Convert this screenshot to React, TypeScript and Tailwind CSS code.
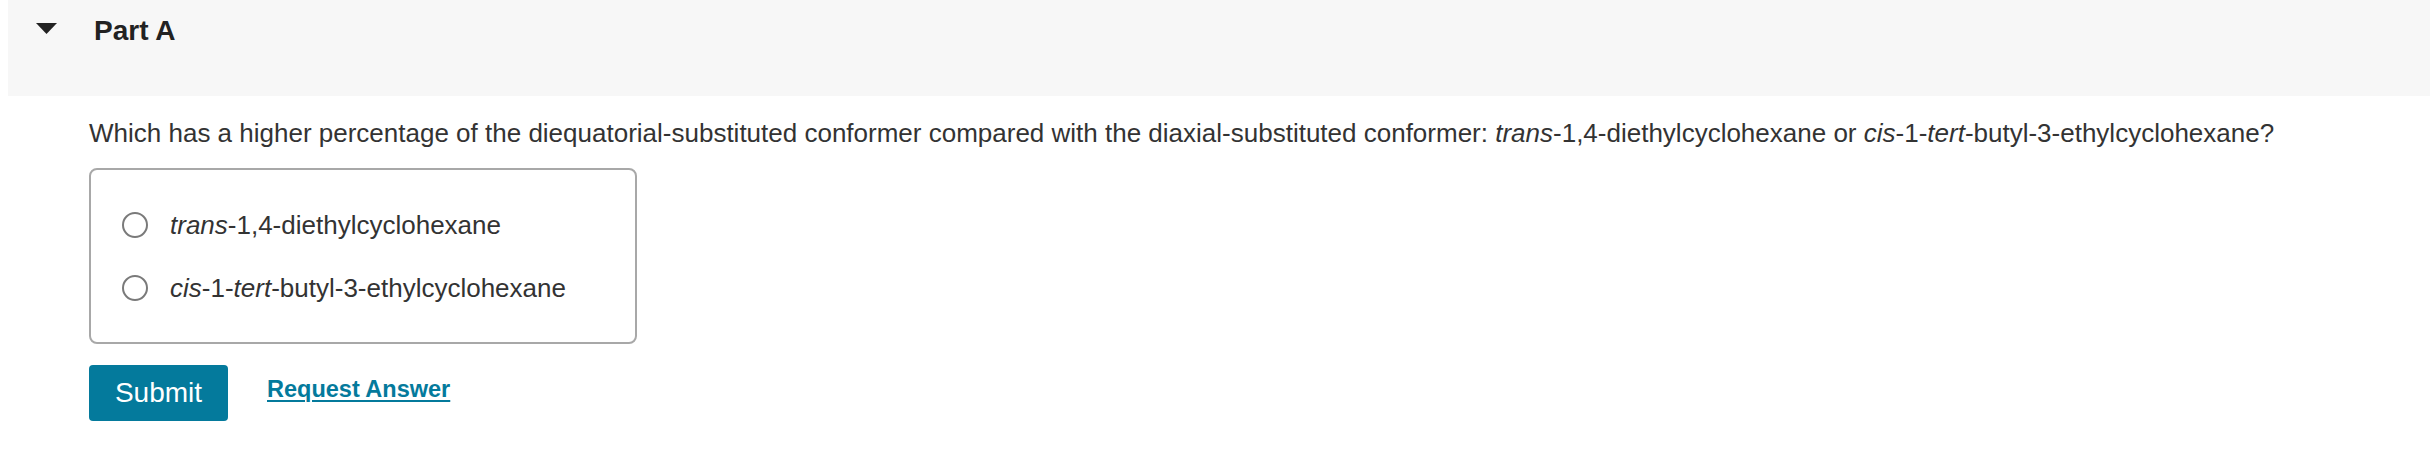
import React from "react";

const font = { fontFamily: '"Liberation Sans", Arial, Helvetica, sans-serif' };

function Radio() {
  return (
    <span className="inline-block w-[26px] h-[26px] rounded-full border-2 border-[#7a7a7a] bg-white shrink-0" />
  );
}

export default function App() {
  return (
    <div className="w-[2430px] h-[470px] bg-white text-[#333333] font-['Liberation_Sans',Arial,sans-serif]" style={font}>
      <div className="ml-[8px] h-[96px] bg-[#f7f7f7] flex items-start">
        <svg className="ml-[28px] mt-[23px] shrink-0" width="21" height="11" viewBox="0 0 21 11">
          <polygon points="0,0 21,0 10.5,11" fill="#222222" />
        </svg>
        <div className="ml-[37px] pt-[15px] text-[28px] leading-[32px] font-bold text-[#222222]">Part A</div>
      </div>
      <div className="pl-[89px]">
        <p className="mt-[19px] text-[26px] leading-[36px]">
          Which has a higher percentage of the diequatorial-substituted conformer compared with the diaxial-substituted conformer: <i>trans</i>-1,4-diethylcyclohexane or <i>cis</i>-1-<i>tert</i>-butyl-3-ethylcyclohexane?
        </p>
        <div className="mt-[17px] w-[548px] h-[176px] border-2 border-[#a8a8a8] rounded-[8px] pl-[31px] pt-[37px] flex flex-col gap-[27px]">
          <label className="flex items-center gap-[22px] text-[26px] leading-[36px]">
            <Radio />
            <span><i>trans</i>-1,4-diethylcyclohexane</span>
          </label>
          <label className="flex items-center gap-[22px] text-[26px] leading-[36px]">
            <Radio />
            <span><i>cis</i>-1-<i>tert</i>-butyl-3-ethylcyclohexane</span>
          </label>
        </div>
        <div className="mt-[21px] flex items-start">
          <button className="w-[139px] h-[56px] rounded-[4px] bg-[#047a9c] text-white text-[28px] leading-[56px] text-center">
            Submit
          </button>
          <a className="ml-[39px] mt-[10px] text-[23.5px] leading-[28px] font-bold text-[#047a9c] underline decoration-2 underline-offset-[3px]">
            Request Answer
          </a>
        </div>
      </div>
    </div>
  );
}
